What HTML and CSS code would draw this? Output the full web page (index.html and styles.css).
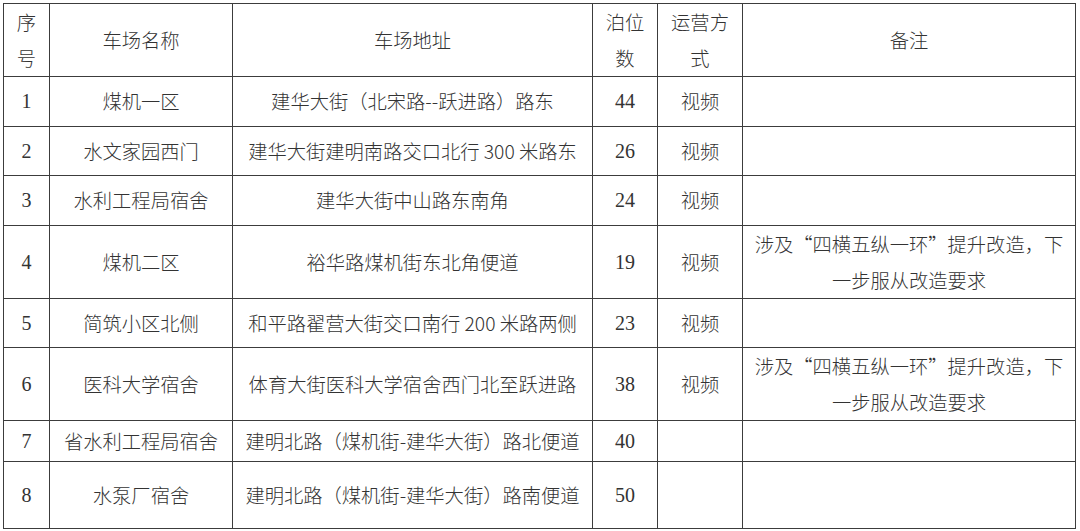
FILE: index.html
```html
<!DOCTYPE html>
<html lang="zh-CN">
<head>
<meta charset="utf-8">
<title>停车场列表</title>
<link rel="stylesheet" href="styles.css">
</head>
<body>
<table class="park-table">
  <colgroup>
    <col class="c-no">
    <col class="c-name">
    <col class="c-addr">
    <col class="c-num">
    <col class="c-mode">
    <col class="c-note">
  </colgroup>
  <tr class="r-head">
    <td>序<br>号</td>
    <td>车场名称</td>
    <td>车场地址</td>
    <td>泊位<br>数</td>
    <td>运营方<br>式</td>
    <td>备注</td>
  </tr>
  <tr class="r-std">
    <td class="num">1</td>
    <td>煤机一区</td>
    <td>建华大街（北宋路--跃进路）路东</td>
    <td class="num">44</td>
    <td>视频</td>
    <td></td>
  </tr>
  <tr class="r-std">
    <td class="num">2</td>
    <td>水文家园西门</td>
    <td>建华大街建明南路交口北行 300 米路东</td>
    <td class="num">26</td>
    <td>视频</td>
    <td></td>
  </tr>
  <tr class="r-std">
    <td class="num">3</td>
    <td>水利工程局宿舍</td>
    <td>建华大街中山路东南角</td>
    <td class="num">24</td>
    <td>视频</td>
    <td></td>
  </tr>
  <tr class="r-tall">
    <td class="num">4</td>
    <td>煤机二区</td>
    <td>裕华路煤机街东北角便道</td>
    <td class="num">19</td>
    <td>视频</td>
    <td>涉及“四横五纵一环”提升改造，下<br>一步服从改造要求</td>
  </tr>
  <tr class="r-std">
    <td class="num">5</td>
    <td>简筑小区北侧</td>
    <td>和平路翟营大街交口南行 200 米路两侧</td>
    <td class="num">23</td>
    <td>视频</td>
    <td></td>
  </tr>
  <tr class="r-tall">
    <td class="num">6</td>
    <td>医科大学宿舍</td>
    <td>体育大街医科大学宿舍西门北至跃进路</td>
    <td class="num">38</td>
    <td>视频</td>
    <td>涉及“四横五纵一环”提升改造，下<br>一步服从改造要求</td>
  </tr>
  <tr class="r-short">
    <td class="num">7</td>
    <td>省水利工程局宿舍</td>
    <td>建明北路（煤机街-建华大街）路北便道</td>
    <td class="num">40</td>
    <td></td>
    <td></td>
  </tr>
  <tr class="r-last">
    <td class="num">8</td>
    <td>水泵厂宿舍</td>
    <td>建明北路（煤机街-建华大街）路南便道</td>
    <td class="num">50</td>
    <td></td>
    <td></td>
  </tr>
</table>
</body>
</html>
```
FILE: styles.css
```css
html, body {
  margin: 0;
  padding: 0;
  background: #ffffff;
}

body {
  padding: 3px 0 0 3px;
  font-family: "Noto Sans CJK SC", "Noto Sans", sans-serif;
  font-weight: 300;
  color: #333333;
}

.park-table {
  border-collapse: collapse;
  table-layout: fixed;
  width: 1073px;
  font-size: 19.3px;
  line-height: 36px;
}

.c-no { width: 46px; }
.c-name { width: 183px; }
.c-addr { width: 360px; }
.c-num { width: 65px; }
.c-mode { width: 85px; }
.c-note { width: 333px; }

.park-table td {
  border: 1.5px solid #3c3c3c;
  text-align: center;
  vertical-align: middle;
  padding: 0 2px;
  white-space: nowrap;
  overflow: hidden;
}

.park-table td.num {
  font-family: "Liberation Serif", "Times New Roman", serif;
  font-weight: 400;
  font-size: 20px;
}

.r-head td { height: 70.5px; }
.r-std td { height: 48.5px; }
.r-tall td { height: 70.5px; }
.r-short td { height: 39.5px; }
.r-last td { height: 66.5px; }
```
